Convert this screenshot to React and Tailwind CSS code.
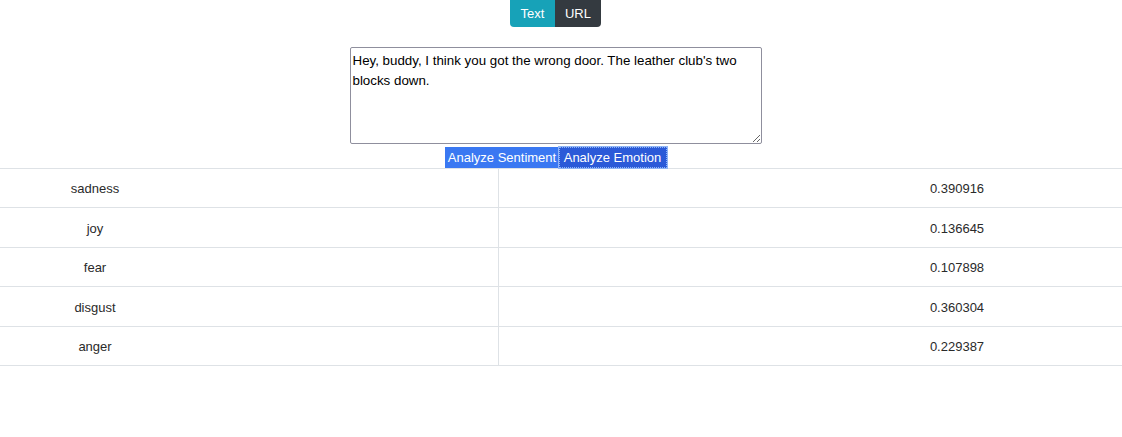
export default function App() {
  const rows = [
    ["sadness", "0.390916"],
    ["joy", "0.136645"],
    ["fear", "0.107898"],
    ["disgust", "0.360304"],
    ["anger", "0.229387"],
  ];
  return (
    <div className="w-[1122px] h-[437px] bg-white text-[#212529]" style={{ fontFamily: '"Liberation Sans", Arial, sans-serif' }}>
      <div className="w-[1111px]">
        <div className="flex justify-center">
          <div className="flex h-[27px] overflow-hidden rounded-b-[4px] text-[13px]">
            <button className="w-[45px] bg-[#17a2b8] text-white">Text</button>
            <button className="w-[46px] bg-[#343a40] text-white">URL</button>
          </div>
        </div>
        <div className="flex justify-center mt-[20px]">
          <textarea
            className="w-[412px] h-[97px] border border-[#8f8f9d] rounded-[2px] px-[2px] pt-[3px] text-[13.33px] leading-[20px] text-black resize-y outline-none"
            style={{ fontFamily: '"Liberation Sans", Arial, sans-serif' }}
            defaultValue={"Hey, buddy, I think you got the wrong door. The leather club's two blocks down."}
          />
        </div>
        <div className="flex justify-center mt-[3px] h-[21px] text-[13px] text-white">
          <button className="h-[21px] w-[114px] bg-[#3a78f2] pl-[1px]">Analyze Sentiment</button>
          <button className="h-[21px] w-[108px] bg-[#2b5ad8] outline outline-1 outline-dotted outline-[#8fb4f6] -outline-offset-1 ring-1 ring-[#8fb4f6]">Analyze Emotion</button>
        </div>
      </div>
      <div className="border-t border-[#dee2e6] text-[13px] text-[#2a2a2a]">
        {rows.map(([k, v]) => (
          <div key={k} className="flex h-[39.4px] border-b border-[#dee2e6]">
            <div className="w-[499px] border-r border-[#dee2e6] flex items-center pt-[2px]">
              <div className="w-[190px] text-center">{k}</div>
            </div>
            <div className="flex-1 flex items-center pt-[2px]">
              <div className="ml-[358px] w-[200px] text-center">{v}</div>
            </div>
          </div>
        ))}
      </div>
    </div>
  );
}
